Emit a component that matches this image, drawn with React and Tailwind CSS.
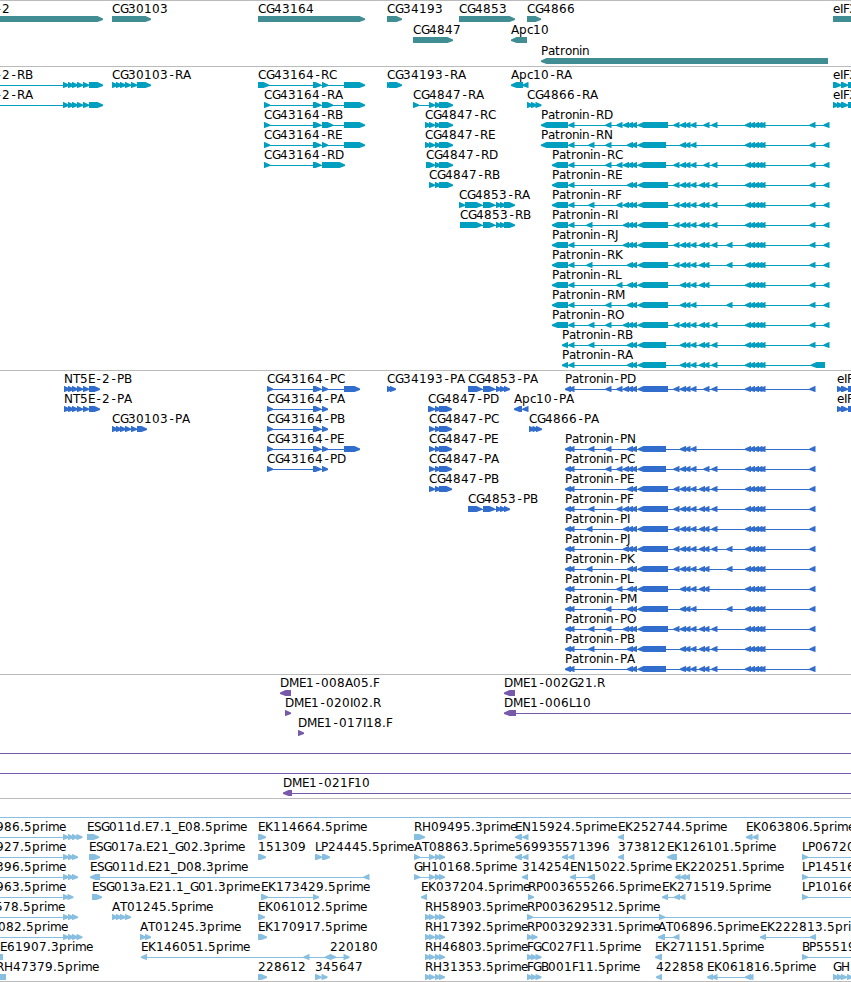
import React from 'react';

// glyph advances of the label font, in pixels
const ADVANCE = {
  A: 8, B: 7, C: 8, D: 9, E: 7, F: 6, G: 8, H: 9, I: 3, J: 3, K: 8, L: 6, M: 10, N: 9, O: 9,
  P: 7, R: 8, S: 7, T: 7, a: 7, c: 6, d: 8, e: 7, i: 3, m: 11, n: 7, o: 7, p: 8, r: 5, t: 5,
  '-': 7, '.': 4, _: 6,
};

const glyphPositions = (text, x) => {
  let pos = x;
  return text.split('').map((ch) => {
    // the hyphen sits in the middle of its cell
    const current = ch === '-' ? pos + 1.4 : pos;
    pos += ADVANCE[ch] || 8;
    return current;
  });
};

// exons: a number is a short exon starting there, a pair is a [start, end] block
const right = (label, x, exons = [], line) => ({ label, x, exons, line, dir: 1 });
const left = (label, x, exons = [], line) => ({ label, x, exons, line, dir: -1 });

const genes = [
  [
    right('-2', -5, [[-10, 103]]),
    right('CG30103', 112, [[112, 151]]),
    right('CG43164', 258, [[258, 365]]),
    right('CG34193', 387, [[387, 402]]),
    right('CG4853', 459, [[459, 515]]),
    right('CG4866', 527, [[527, 541]]),
    right('eIF3', 833, [[833, 870]]),
  ],
  [right('CG4847', 413, [[413, 453]]), left('Apc10', 511, [[511, 527]])],
  [left('Patronin', 541, [[541, 828]])],
];

// exons shared by the Patronin isoforms
const PATRONIN = {
  a: [588.5], A: [586.5], b: [605.5], c: [616.5], d: [623], e: [627, 631],
  L: [[638, 668]], S: [[638, 666]],
  f: [673.5], g: [680, 684.5], h: [690.5], i: [699], k: [703.5], j: [711.5], m: [726.5],
};
const CLUSTER = [745, 749, 753, 756.5, 759.5];
const patroninExons = (keys) => keys.split('').flatMap((key) => PATRONIN[key]);

const patroninR = (name, start, keys) =>
  left(`Patronin-${name}`, start, [[start, 568], 568.5, ...patroninExons(keys), ...CLUSTER, 809.5, 823.5]);
const patroninP = (name, keys) =>
  left(`Patronin-${name}`, 565, [565, 568.5, ...patroninExons(keys), ...CLUSTER, 809.5]);

const cg4847 = [435, [439, 453]];
const cg4853 = [[483, 495], 496, 500, [504, 515]];

const transcripts = [
  [
    right('-2-RB', -5, [63, 68, 72, 77, 83, [89, 103]], [-5, 100]),
    right('CG30103-RA', 112, [112, 116, 120, 125, 131, [137, 151]]),
    right('CG43164-RC', 258, [[258, 269], [313, 321], 322, [344, 365]]),
    right('CG34193-RA', 387, [387, [389, 402]]),
    left('Apc10-RA', 511, [[511, 523], 522.5]),
    right('eIF3', 833, [[833, 841], [841, 848], [848, 870]]),
  ],
  [
    right('-2-RA', -5, [63, 68, 72, 77, 83, [89, 103]], [-5, 100]),
    right('CG43164-RA', 264, [264, [313, 321], [322, 333], [344, 365]]),
    right('CG4847-RA', 413, [413, 429, ...cg4847]),
    right('CG4866-RA', 527, [527, 531, 535.5]),
    right('eIF3', 833, [833, 837, [841, 848], [848, 870]]),
  ],
  [
    right('CG43164-RB', 264, [264, [313, 321], [322, 333], [344, 365]]),
    right('CG4847-RC', 425, [425, 429, ...cg4847]),
    patroninR('RD', 541, 'bcdeLfghkj'),
  ],
  [
    right('CG43164-RE', 264, [264, [313, 321], 322, [344, 365]]),
    right('CG4847-RE', 425, [425, 429, ...cg4847]),
    patroninR('RN', 541, 'abeSgh'),
  ],
  [
    right('CG43164-RD', 264, [264, [313, 321], [322, 345]]),
    right('CG4847-RD', 426, [[426, 435], ...cg4847]),
    patroninR('RC', 552, 'bcdeSfghkj'),
  ],
  [right('CG4847-RB', 429, [429, ...cg4847]), patroninR('RE', 552, 'eLfghikj')],
  [right('CG4853-RA', 459, [459, [465, 482], ...cg4853]), patroninR('RF', 552, 'acdeLfghikj')],
  [right('CG4853-RB', 460, [[460, 482], ...cg4853]), patroninR('RI', 552, 'AdeLfghikj')],
  [patroninR('RJ', 552, 'deLfghikjm')],
  [patroninR('RK', 552, 'AeLfghikm')],
  [patroninR('RL', 552, 'ceLghik')],
  [patroninR('RM', 552, 'beLghm')],
  [patroninR('RO', 552, 'abdeLfghikj')],
  [patroninR('RB', 562, 'aeSghikj')],
  [left('Patronin-RA', 562, [[562, 568], 568.5, ...patroninExons('eSghikj'), ...CLUSTER, [811, 825]])],
];

const cg4847p = [435, [439, 452]];
const cg4853p = [[468, 482], [483, 495], 496, 500, 504];

const proteins = [
  [
    right('NT5E-2-PB', 64, [64, 68, 72, 77, 83, [89, 100]]),
    right('CG43164-PC', 267, [267, [313, 321], 322, [344, 360]]),
    right('CG34193-PA', 387, [387, 390]),
    right('CG4853-PA', 468, cg4853p),
    patroninP('PD', 'bcdeLfghkj'),
    right('eIF3', 837, [837, [841, 848], [848, 870]]),
  ],
  [
    right('NT5E-2-PA', 64, [64, 68, 72, 77, 83, [89, 100]]),
    right('CG43164-PA', 267, [267, [313, 321], 322]),
    right('CG4847-PD', 428, [[428, 435], ...cg4847p]),
    left('Apc10-PA', 514, [[514, 522], 522.5]),
    right('eIF3', 837, [837, [841, 848], [848, 870]]),
  ],
  [
    right('CG30103-PA', 112, [112, 116, 120, 125, 131, [137, 147]]),
    right('CG43164-PB', 267, [267, [313, 321], 322]),
    right('CG4847-PC', 429, [429, ...cg4847p]),
    right('CG4866-PA', 529, [529, 532.5, 536]),
  ],
  [
    right('CG43164-PE', 267, [267, [313, 321], 322, [344, 360]]),
    right('CG4847-PE', 429, [429, ...cg4847p]),
    patroninP('PN', 'abeSgh'),
  ],
  [
    right('CG43164-PD', 267, [267, [313, 321], 322]),
    right('CG4847-PA', 429, [429, ...cg4847p]),
    patroninP('PC', 'bcdeSfghkj'),
  ],
  [right('CG4847-PB', 429, [429, ...cg4847p]), patroninP('PE', 'eLfghikj')],
  [right('CG4853-PB', 468, cg4853p), patroninP('PF', 'acdeLfghikj')],
  [patroninP('PI', 'AdeLfghikj')],
  [patroninP('PJ', 'deLfghikjm')],
  [patroninP('PK', 'AeLfghikm')],
  [patroninP('PL', 'ceLghik')],
  [patroninP('PM', 'beLghm')],
  [patroninP('PO', 'abdeLfghikj')],
  [patroninP('PB', 'aeSghikj')],
  [patroninP('PA', 'eSghikj')],
];

const clones = [
  [left('DME1-008A05.F', 280, [[280, 291]]), left('DME1-002G21.R', 504, [[504, 515]])],
  [right('DME1-020I02.R', 285, [[285, 291]]), left('DME1-006L10', 504, [[504, 516]], [504, 855])],
  [right('DME1-017I18.F', 298, [298])],
  [right('', 0, [], [-5, 855])],
  [right('', 0, [], [-5, 855])],
  [left('DME1-021F10', 283, [[283, 292]], [283, 855])],
];

const rh = [425, 429, 435, 439];

const ests = [
  [right('', 0, [], [-5, 855])],
  [
    right('986.5prime', -4, [63, 68, 72, 76.5], [-5, 80]),
    right('ESG011d.E7.1_E08.5prime', 87, [[87, 99]]),
    right('EK114664.5prime', 258, [[258, 266]]),
    right('RH09495.3prime', 414, [[414, 425]]),
    left('EN15924.5prime', 515, [[515, 522], 522.5]),
    left('EK252744.5prime', 618, [618]),
    left('EK063806.5prime', 746, [[746, 752.5], 752.5]),
  ],
  [
    right('927.5prime', -4, [63, 68, 72], [-5, 75]),
    right('ESG017a.E21_G02.3prime', 89, [[89, 100]]),
    right('151309', 258, [[258, 266]]),
    right('LP24445.5prime', 315, [[315, 322], [322, 330]]),
    right('AT08863.5prime', 414, [414, 429, 435, 439]),
    left('569935', 515, [[515, 522], 522.5]),
    left('571396', 562, [[562, 568], 568.5]),
    left('373812', 618, [618]),
    left('EK126101.5prime', 667, [[667, 677]]),
    right('LP06720', 802, [802], [802, 855]),
  ],
  [
    right('396.5prime', -4, [63, 68, 72], [-5, 75]),
    left('ESG011d.E21_D08.3prime', 90, [[90, 100], 363.5]),
    right('GH10168.5prime', 414, [414, 429, 435, 439]),
    left('314254', 522, [522]),
    left('EN15022.5prime', 570, [570, [588, 595]]),
    left('EK220251.5prime', 675, [[675, 680.5], 680, 684]),
    right('LP14516', 802, [802], [802, 855]),
  ],
  [
    right('963.5prime', -4, [63, 67.5], [-5, 72]),
    right('ESG013a.E21.1_G01.3prime', 92, [[92, 102]]),
    right('EK173429.5prime', 261, [[261, 268], 313]),
    left('EK037204.5prime', 421, [[421, 427]]),
    right('RP003655266.5prime', 528, [528]),
    left('EK271519.5prime', 662, [662, 674, 679.5]),
    right('LP10166', 802, [802], [802, 855]),
  ],
  [
    right('578.5prime', -5, [63, 68, 72], [-5, 75]),
    right('AT01245.5prime', 112, [112, 116, 120, 125]),
    right('EK061012.5prime', 258, [[258, 265]]),
    right('RH58903.5prime', 425, rh),
    right('RP003629512.5prime', 527, [527, 659], [527, 855]),
  ],
  [
    right('082.5prime', -2, [63, 68, 72, 76.5], [-5, 80]),
    right('AT01245.3prime', 140, [140, [145, 151]]),
    right('EK170917.5prime', 258, [[258, 267]]),
    right('RH17392.5prime', 425, rh),
    right('RP003292331.5prime', 527, [527, 531.5]),
    left('AT06896.5prime', 658, [[658, 665], 673.5]),
    left('EK222813.5prime', 760, [760, 810]),
  ],
  [
    left('E61907.3prime', 0, [[-12, 3]]),
    left('EK146051.5prime', 141, [141, 303.5, [325, 331]]),
    right('220180', 330, [330, 343.5]),
    right('RH46803.5prime', 425, rh),
    right('FGC027F11.5prime', 527, [527, 531, 535.5]),
    left('EK271151.5prime', 655, [[655, 662]]),
    right('BP55519', 802, [802], [802, 855]),
  ],
  [
    left('RH47379.5prime', -4, [[-12, 6]]),
    right('228612', 258, [[258, 267]]),
    right('345647', 315, [[315, 321.5], 321.5]),
    right('RH31353.5prime', 425, rh),
    right('FGB001F11.5prime', 527, [527, 531, 535.5]),
    left('422858', 656, [[656, 662]]),
    left('EK061816.5prime', 707, [707, 711.5, 745, 747.5]),
    right('GH1', 833, [833, 837, 841, 847]),
  ],
];

const Exon = ({ exon, dir }) => {
  const [start, end] = Array.isArray(exon) ? exon : [exon, exon + 6];
  const head = Math.min(6, end - start);
  const points =
    dir > 0
      ? `${start},15 ${end - head + 0.5},15 ${end},17.6 ${end},19 ${end - head + 0.5},21 ${start},21`
      : `${end},15 ${start + head - 0.5},15 ${start},17.6 ${start},19 ${start + head - 0.5},21 ${end},21`;
  return <polygon points={points} />;
};

const Feature = ({ feature }) => {
  const { label, x, exons, dir } = feature;
  const bounds = exons.flatMap((exon) => (Array.isArray(exon) ? exon : [exon, exon + 5]));
  const [from, to] = feature.line || [Math.min(...bounds), Math.max(...bounds)];
  return (
    <g>
      <rect x={from + 1} y="18" width={to - from - 2} height="1" />
      {exons.map((exon, i) => (
        <Exon key={i} exon={exon} dir={dir} />
      ))}
      {label && (
        <text x={glyphPositions(label, x).join(' ')} y="12" className="fill-black">
          {label}
        </text>
      )}
    </g>
  );
};

const Track = ({ rows, color, rowClass = 'h-5', className = 'pb-[3px]' }) => (
  <section className={`border-t border-[#bbbbbb] ${color} ${className}`}>
    {rows.map((row, i) => (
      <div key={i} className={rowClass}>
        <svg className="block h-full w-full overflow-visible fill-current">
          {row.map((feature, j) => (
            <Feature key={j} feature={feature} />
          ))}
        </svg>
      </div>
    ))}
  </section>
);

const App = () => {
  return (
    <div className="flex h-[982px] w-[851px] flex-col overflow-hidden bg-white font-['DejaVu_Sans',sans-serif] text-[12px]">
      <Track rows={genes} color="text-[#408e94]" rowClass="h-[21px]" className="pb-[2px]" />
      <Track rows={transcripts} color="text-[#009fc0]" />
      <Track rows={proteins} color="text-[#316dcc]" />
      <Track rows={clones} color="text-[#775aaa]" />
      <Track rows={ests} color="text-[#88bfe0]" className="border-b pb-[2px]" />
    </div>
  );
};

export default App;
